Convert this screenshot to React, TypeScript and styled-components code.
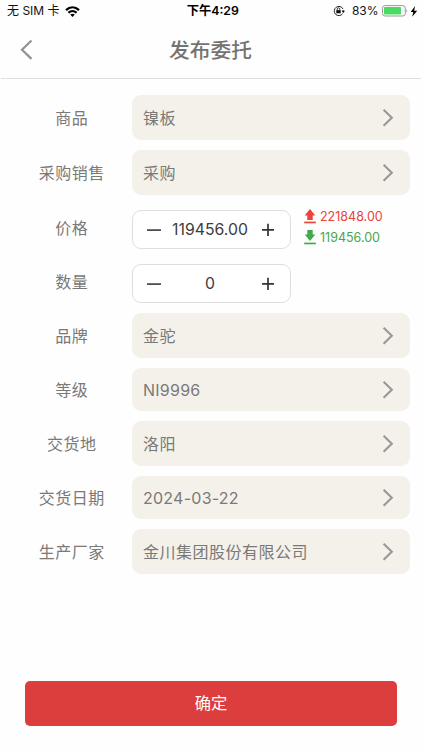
import React from 'react';
import styled, { createGlobalStyle } from 'styled-components';

const GlobalStyle = createGlobalStyle`
  * { box-sizing: border-box; }
  body { margin: 0; background: #fefefe; }
  button { font: inherit; border: 0; background: none; padding: 0; letter-spacing: inherit; color: inherit; }
`;

const Screen = styled.div`
  width: 422px;
  height: 750px;
  display: flex;
  flex-direction: column;
  overflow: hidden;
  background: #fefefe;
  color: #7a7977;
  font-family: Inter, "Noto Sans CJK SC", sans-serif;
`;

const StatusBar = styled.div`
  height: 22px;
  padding: 0 4.5px 0 7px;
  display: grid;
  grid-template-columns: 1fr auto 1fr;
  align-items: center;
  font-size: 12px;
  line-height: 22px;
  color: #111;
  svg { display: block; flex: none; }
`;

const Carrier = styled.div`
  display: flex;
  align-items: center;
  gap: 5px;
`;

const Clock = styled.div`
  margin-left: 1px;
  font-size: 12.3px;
  font-weight: 600;
  color: #000;
`;

const Indicators = styled.div`
  display: flex;
  justify-content: flex-end;
  align-items: center;
`;

const Percent = styled.span`
  margin: 0 3px 0 7px;
`;

const Header = styled.header`
  height: 57px;
  margin: 0 1px;
  border-bottom: 1px solid #dfdfdf;
  display: grid;
  grid-template-columns: 50px 1fr 50px;
  align-items: center;
  padding-bottom: 1px;
  svg { display: block; }
`;

const BackButton = styled.button`
  padding-left: 19px;
  height: 22px;
`;

const Title = styled.h1`
  margin: 2px 1px 0 0;
  text-align: center;
  font-size: 20.7px;
  line-height: 30px;
  font-weight: 500;
  color: #747372;
`;

const Form = styled.main`
  flex: 1;
  padding: 16px 12.5px 0 12px;
  font-size: 16px;
  letter-spacing: 0.5px;
`;

const Row = styled.div<{ $height: number; $gap: number }>`
  display: flex;
  align-items: center;
  height: ${(p) => p.$height}px;
  margin-bottom: ${(p) => p.$gap}px;
`;

const Label = styled.div<{ $raise?: number }>`
  width: 119.5px;
  flex: none;
  text-align: center;
  line-height: 24px;
  padding-bottom: ${(p) => p.$raise ?? 0}px;
`;

const SelectField = styled.button`
  flex: 1;
  height: 100%;
  display: flex;
  align-items: center;
  justify-content: space-between;
  padding: 0 15.5px 0 11.5px;
  border-radius: 9px;
  background: #f4f1eb;
  text-align: left;
  line-height: 24px;
  svg { display: block; flex: none; }
`;

const FieldValue = styled.span<{ $latin: boolean }>`
  padding-top: ${(p) => (p.$latin ? 0 : 1)}px;
  letter-spacing: ${(p) => (p.$latin ? 0.25 : 0.5)}px;
`;

const StepperBox = styled.div`
  width: 159px;
  height: 100%;
  flex: none;
  display: grid;
  grid-template-columns: 14px 1fr 14px;
  align-items: center;
  padding: 0 15px 0 14px;
  border: 1px solid #dedede;
  border-radius: 9px;
  background: #fff;
  color: #3c3c3c;
  svg { display: block; }
`;

const Amount = styled.span`
  text-align: center;
  white-space: nowrap;
  font-size: 15.8px;
  letter-spacing: 0;
  padding-right: 1px;
`;

const Limits = styled.div`
  margin-left: 13.5px;
  padding-bottom: 5px;
  display: flex;
  flex-direction: column;
`;

const Limit = styled.div<{ $color: string }>`
  display: flex;
  align-items: center;
  gap: 4px;
  height: 20.5px;
  font-size: 12.5px;
  letter-spacing: 0;
  color: ${(p) => p.$color};
  svg { display: block; }
`;

const Footer = styled.footer`
  height: 69.5px;
  padding: 0 25px;
`;

const Submit = styled.button`
  width: 100%;
  height: 45px;
  border-radius: 5px;
  background: #dc3d3d;
  color: #fff;
  font-size: 16.3px;
  line-height: 45px;
  display: block;
`;

const Chevron = () => (
  <svg width="12" height="18" viewBox="0 0 12 18" fill="none" stroke="#999795" strokeWidth="2.1">
    <path d="M1.6 0.8L9.8 8.8L1.6 16.8" />
  </svg>
);

const Minus = () => (
  <svg width="14" height="14" viewBox="0 0 14 14" stroke="#444" strokeWidth="1.7">
    <path d="M0 7.1H14" />
  </svg>
);

const Plus = () => (
  <svg width="14" height="14" viewBox="0 0 14 14" stroke="#333" strokeWidth="1.7">
    <path d="M1 6.9H13M7 0.8V13" />
  </svg>
);

const LimitArrow = ({ down = false }: { down?: boolean }) => (
  <svg width="12" height="15" viewBox="0 0 12 15" fill="currentColor">
    {down ? <path d="M3.3 0H8.7V4.5H11.3L6 11L0.7 4.5H3.3Z" /> : <path d="M6 0L11.3 6.5H8.7V11H3.3V6.5H0.7Z" />}
    <path d="M0.2 12.6H11.8V14.3H0.2Z" />
  </svg>
);

type FieldProps = { label: string; value: string; height: number; gap: number };

const Field = ({ label, value, height, gap }: FieldProps) => (
  <Row $height={height} $gap={gap}>
    <Label>{label}</Label>
    <SelectField>
      <FieldValue $latin={/^[\x20-\x7e]+$/.test(value)}>{value}</FieldValue>
      <Chevron />
    </SelectField>
  </Row>
);

const Stepper = ({ value }: { value: string }) => (
  <StepperBox>
    <button aria-label="减少"><Minus /></button>
    <Amount>{value}</Amount>
    <button aria-label="增加"><Plus /></button>
  </StepperBox>
);

const orderFields: FieldProps[] = [
  { label: '品牌', value: '金驼', height: 45, gap: 10 },
  { label: '等级', value: 'NI9996', height: 43, gap: 10 },
  { label: '交货地', value: '洛阳', height: 45, gap: 10 },
  { label: '交货日期', value: '2024-03-22', height: 43, gap: 10 },
  { label: '生产厂家', value: '金川集团股份有限公司', height: 45, gap: 0 },
];

export default function App() {
  return (
    <Screen>
      <GlobalStyle />
      <StatusBar>
        <Carrier>
          <span>无 SIM 卡</span>
          <svg width="15" height="11" viewBox="0 0 15 11" fill="none" stroke="#000" strokeWidth="2.2">
            <path d="M1 4.1C4.8 0.3 10.2 0.3 14 4.1M3.4 6.8C5.8 4.5 9.2 4.5 11.6 6.8" />
            <path d="M7.5 11L5.2 8.5Q7.5 6.8 9.8 8.5Z" fill="#000" stroke="none" />
          </svg>
        </Carrier>
        <Clock>下午4:29</Clock>
        <Indicators>
          <svg width="12" height="12" viewBox="0 0 12 12" fill="none" stroke="#222">
            <path d="M9.6 8.7A4.6 4.6 0 1 1 10 4" />
            <path d="M10.1 5V7.2" />
            <path d="M8.7 5.7H12L10.3 8Z" fill="#111" stroke="none" />
            <path d="M3.3 5.1H7.7V8.3H3.3Z" fill="#111" stroke="none" />
            <path d="M4.2 5.3V4.2A1.3 1.3 0 0 1 6.8 4.2V5.3" strokeWidth=".9" />
          </svg>
          <Percent>83%</Percent>
          <svg width="28" height="12" viewBox="0 0 28 12" fill="none">
            <rect x=".5" y=".6" width="22.8" height="10.4" rx="2.5" stroke="#999" />
            <rect x="2" y="2.1" width="17" height="7.4" rx="1" fill="#4cd964" />
            <path d="M24.3 4Q26.2 5.8 24.3 7.6Z" fill="#999" />
          </svg>
          <svg width="8" height="11" viewBox="0 0 8 11" fill="#000">
            <path d="M5 0L0.7 6H3.3L2.2 10.8L7.2 4.7H4.2Z" />
          </svg>
        </Indicators>
      </StatusBar>
      <Header>
        <BackButton aria-label="返回">
          <svg width="13" height="22" viewBox="0 0 13 22" fill="none" stroke="#929292" strokeWidth="2.2">
            <path d="M11.5 1.5L2 10.7L11.5 19.9" />
          </svg>
        </BackButton>
        <Title>发布委托</Title>
      </Header>
      <Form>
        <Field label="商品" value="镍板" height={45} gap={10} />
        <Field label="采购销售" value="采购" height={45} gap={15} />
        <Row $height={39} $gap={15}>
          <Label $raise={4}>价格</Label>
          <Stepper value="119456.00" />
          <Limits>
            <Limit $color="#ea4339"><LimitArrow />221848.00</Limit>
            <Limit $color="#46a84b"><LimitArrow down />119456.00</Limit>
          </Limits>
        </Row>
        <Row $height={39} $gap={10}>
          <Label $raise={3}>数量</Label>
          <Stepper value="0" />
        </Row>
        {orderFields.map((field) => <Field key={field.label} {...field} />)}
      </Form>
      <Footer>
        <Submit>确定</Submit>
      </Footer>
    </Screen>
  );
}
